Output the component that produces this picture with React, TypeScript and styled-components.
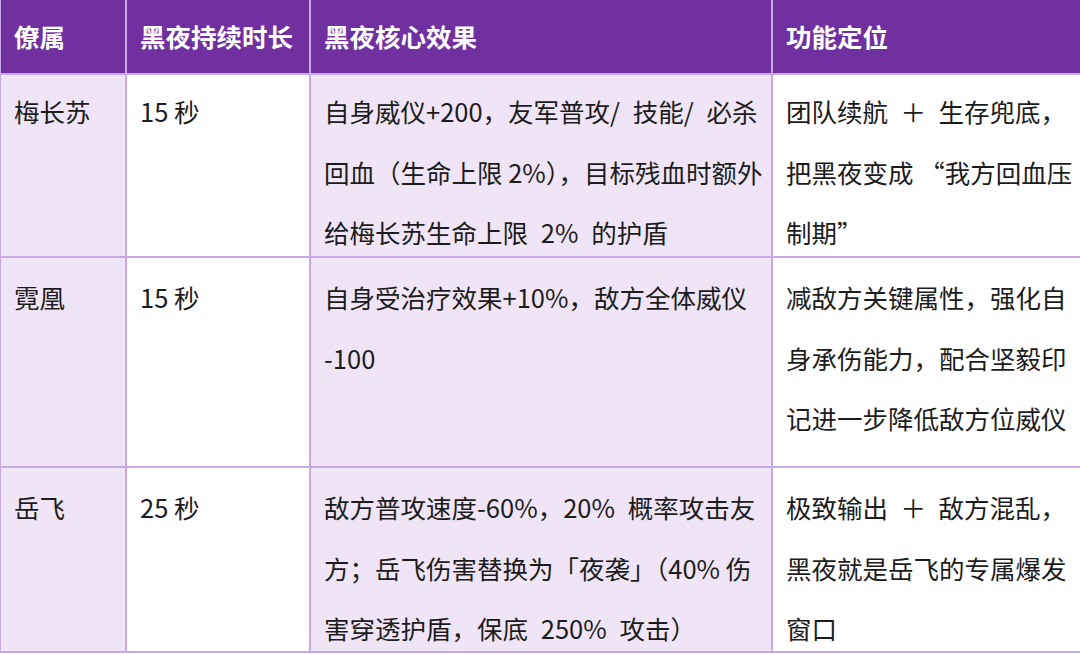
import React from "react";
import styled, { createGlobalStyle } from "styled-components";

const Global = createGlobalStyle`
  html, body { margin: 0; padding: 0; background: #ffffff; }
  body { font-family: "Noto Sans CJK SC", "Noto Sans", sans-serif; }
`;

const Table = styled.div`
  width: 1080px;
  height: 654px;
  box-sizing: border-box;
  display: grid;
  grid-template-columns: 124px 182px 460px 1fr;
  grid-template-rows: 73px 181px 208px 183px;
  column-gap: 2px;
  row-gap: 2px;
  padding: 0 0 3px 1px;
  background: linear-gradient(#c9a8e6, #c9a8e6) 0 0 / 100% 653px no-repeat, #ffffff;
  font-family: "Noto Sans CJK SC", "Noto Sans", sans-serif;
`;

const HeadCell = styled.div`
  background: #7030a0;
  color: #ffffff;
  font-weight: 700;
  font-size: 25.5px;
  display: flex;
  align-items: center;
  padding: 0 0 2px 13px;
  white-space: nowrap;
`;

const Cell = styled.div<{ $shade?: boolean; $top: number }>`
  background: ${(p) => (p.$shade ? "#efe5f7" : "#ffffff")};
  color: #1c1c1c;
  font-size: 25.5px;
  line-height: 60.5px;
  padding: ${(p) => p.$top}px 0 0 13px;
  white-space: nowrap;
  overflow: visible;
`;

const Line = styled.div`
  display: block;
`;

const Sp = styled.span`
  display: inline-block;
  width: 12.5px;
`;

type Row = {
  name: string;
  time: string;
  effect: React.ReactNode[];
  role: React.ReactNode[];
  top: number;
};

const E = "\u2002";

const rows: Row[] = [
  {
    name: "梅长苏",
    time: "15 秒",
    top: 6,
    effect: [
      `自身威仪+200，友军普攻/${E}技能/${E}必杀`,
      "回血（生命上限 2%），目标残血时额外",
      `给梅长苏生命上限${E}2%${E}的护盾`,
    ],
    role: [
      <>团队续航<Sp />＋<Sp />生存兜底，</>,
      "把黑夜变成 “我方回血压",
      "制期”",
    ],
  },
  {
    name: "霓凰",
    time: "15 秒",
    top: 9,
    effect: ["自身受治疗效果+10%，敌方全体威仪", "-100"],
    role: ["减敌方关键属性，强化自", "身承伤能力，配合坚毅印", "记进一步降低敌方位威仪"],
  },
  {
    name: "岳飞",
    time: "25 秒",
    top: 9,
    effect: [
      `敌方普攻速度-60%，20%${E}概率攻击友`,
      "方；岳飞伤害替换为「夜袭」（40% 伤",
      `害穿透护盾，保底${E}250%${E}攻击）`,
    ],
    role: [
      <>极致输出<Sp />＋<Sp />敌方混乱，</>,
      "黑夜就是岳飞的专属爆发",
      "窗口",
    ],
  },
];

export default function App() {
  return (
    <>
      <Global />
      <Table lang="zh-CN">
        <HeadCell>僚属</HeadCell>
        <HeadCell>黑夜持续时长</HeadCell>
        <HeadCell>黑夜核心效果</HeadCell>
        <HeadCell>功能定位</HeadCell>
        {rows.map((r) => (
          <React.Fragment key={r.name}>
            <Cell $shade $top={r.top}>{r.name}</Cell>
            <Cell $top={r.top}>{r.time}</Cell>
            <Cell $shade $top={r.top}>
              {r.effect.map((l, i) => (
                <Line key={i}>{l}</Line>
              ))}
            </Cell>
            <Cell $top={r.top}>
              {r.role.map((l, i) => (
                <Line key={i}>{l}</Line>
              ))}
            </Cell>
          </React.Fragment>
        ))}
      </Table>
    </>
  );
}
